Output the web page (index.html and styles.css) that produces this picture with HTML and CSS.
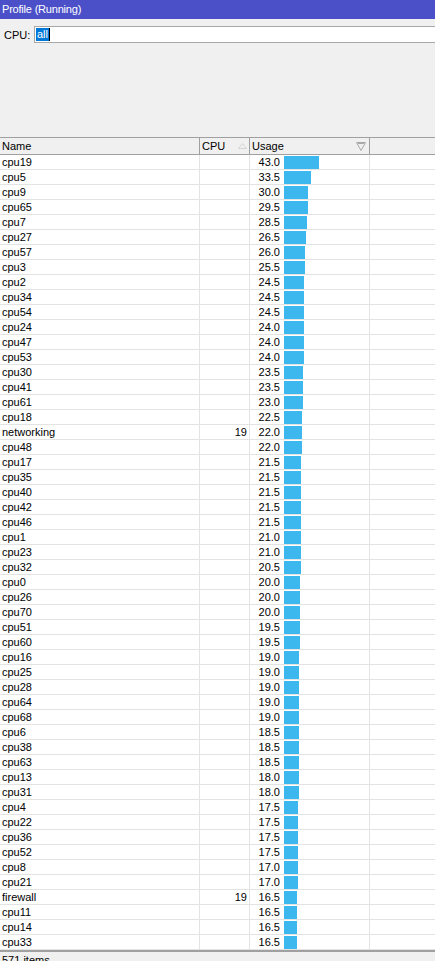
FILE: index.html
```html
<!DOCTYPE html>
<html>
<head>
<meta charset="utf-8">
<title>Profile</title>
<link rel="stylesheet" href="styles.css">
</head>
<body>
<div class="window">
  <div class="titlebar">Profile (Running)</div>
  <div class="panel">
    <div class="field">
      <span class="label">CPU:</span>
      <div class="input"><span class="sel">all</span><span class="caret"></span></div>
    </div>
  </div>
  <div class="grid">
    <div class="row head">
      <div class="c name">Name</div>
      <div class="c cpu hc">CPU<svg class="sort" width="9" height="6" viewBox="0 0 9 6"><path d="M0.5 5.5 L4.5 0.5 L8.5 5.5 Z" fill="none" stroke="#d4d4d4" stroke-width="1"/></svg></div>
      <div class="c usage hc">Usage<svg class="filt" width="10" height="9" viewBox="0 0 10 9"><path d="M0.5 0.5 H9.5 L5 8.5 Z M2 1.5 H8" fill="none" stroke="#a8a8a8" stroke-width="1"/></svg></div>
      <div class="c rest"></div>
    </div>
    <div class="rows" id="rows">
      <div class="row"><div class="c name">cpu19</div><div class="c cpu"></div><div class="c usage"><span class="num">43.0</span><span class="bar" style="width:35px"></span></div><div class="c rest"></div></div>
      <div class="row"><div class="c name">cpu5</div><div class="c cpu"></div><div class="c usage"><span class="num">33.5</span><span class="bar" style="width:27px"></span></div><div class="c rest"></div></div>
      <div class="row"><div class="c name">cpu9</div><div class="c cpu"></div><div class="c usage"><span class="num">30.0</span><span class="bar" style="width:24px"></span></div><div class="c rest"></div></div>
      <div class="row"><div class="c name">cpu65</div><div class="c cpu"></div><div class="c usage"><span class="num">29.5</span><span class="bar" style="width:24px"></span></div><div class="c rest"></div></div>
      <div class="row"><div class="c name">cpu7</div><div class="c cpu"></div><div class="c usage"><span class="num">28.5</span><span class="bar" style="width:23px"></span></div><div class="c rest"></div></div>
      <div class="row"><div class="c name">cpu27</div><div class="c cpu"></div><div class="c usage"><span class="num">26.5</span><span class="bar" style="width:22px"></span></div><div class="c rest"></div></div>
      <div class="row"><div class="c name">cpu57</div><div class="c cpu"></div><div class="c usage"><span class="num">26.0</span><span class="bar" style="width:21px"></span></div><div class="c rest"></div></div>
      <div class="row"><div class="c name">cpu3</div><div class="c cpu"></div><div class="c usage"><span class="num">25.5</span><span class="bar" style="width:21px"></span></div><div class="c rest"></div></div>
      <div class="row"><div class="c name">cpu2</div><div class="c cpu"></div><div class="c usage"><span class="num">24.5</span><span class="bar" style="width:20px"></span></div><div class="c rest"></div></div>
      <div class="row"><div class="c name">cpu34</div><div class="c cpu"></div><div class="c usage"><span class="num">24.5</span><span class="bar" style="width:20px"></span></div><div class="c rest"></div></div>
      <div class="row"><div class="c name">cpu54</div><div class="c cpu"></div><div class="c usage"><span class="num">24.5</span><span class="bar" style="width:20px"></span></div><div class="c rest"></div></div>
      <div class="row"><div class="c name">cpu24</div><div class="c cpu"></div><div class="c usage"><span class="num">24.0</span><span class="bar" style="width:20px"></span></div><div class="c rest"></div></div>
      <div class="row"><div class="c name">cpu47</div><div class="c cpu"></div><div class="c usage"><span class="num">24.0</span><span class="bar" style="width:20px"></span></div><div class="c rest"></div></div>
      <div class="row"><div class="c name">cpu53</div><div class="c cpu"></div><div class="c usage"><span class="num">24.0</span><span class="bar" style="width:20px"></span></div><div class="c rest"></div></div>
      <div class="row"><div class="c name">cpu30</div><div class="c cpu"></div><div class="c usage"><span class="num">23.5</span><span class="bar" style="width:19px"></span></div><div class="c rest"></div></div>
      <div class="row"><div class="c name">cpu41</div><div class="c cpu"></div><div class="c usage"><span class="num">23.5</span><span class="bar" style="width:19px"></span></div><div class="c rest"></div></div>
      <div class="row"><div class="c name">cpu61</div><div class="c cpu"></div><div class="c usage"><span class="num">23.0</span><span class="bar" style="width:19px"></span></div><div class="c rest"></div></div>
      <div class="row"><div class="c name">cpu18</div><div class="c cpu"></div><div class="c usage"><span class="num">22.5</span><span class="bar" style="width:18px"></span></div><div class="c rest"></div></div>
      <div class="row"><div class="c name">networking</div><div class="c cpu">19</div><div class="c usage"><span class="num">22.0</span><span class="bar" style="width:18px"></span></div><div class="c rest"></div></div>
      <div class="row"><div class="c name">cpu48</div><div class="c cpu"></div><div class="c usage"><span class="num">22.0</span><span class="bar" style="width:18px"></span></div><div class="c rest"></div></div>
      <div class="row"><div class="c name">cpu17</div><div class="c cpu"></div><div class="c usage"><span class="num">21.5</span><span class="bar" style="width:17px"></span></div><div class="c rest"></div></div>
      <div class="row"><div class="c name">cpu35</div><div class="c cpu"></div><div class="c usage"><span class="num">21.5</span><span class="bar" style="width:17px"></span></div><div class="c rest"></div></div>
      <div class="row"><div class="c name">cpu40</div><div class="c cpu"></div><div class="c usage"><span class="num">21.5</span><span class="bar" style="width:17px"></span></div><div class="c rest"></div></div>
      <div class="row"><div class="c name">cpu42</div><div class="c cpu"></div><div class="c usage"><span class="num">21.5</span><span class="bar" style="width:17px"></span></div><div class="c rest"></div></div>
      <div class="row"><div class="c name">cpu46</div><div class="c cpu"></div><div class="c usage"><span class="num">21.5</span><span class="bar" style="width:17px"></span></div><div class="c rest"></div></div>
      <div class="row"><div class="c name">cpu1</div><div class="c cpu"></div><div class="c usage"><span class="num">21.0</span><span class="bar" style="width:17px"></span></div><div class="c rest"></div></div>
      <div class="row"><div class="c name">cpu23</div><div class="c cpu"></div><div class="c usage"><span class="num">21.0</span><span class="bar" style="width:17px"></span></div><div class="c rest"></div></div>
      <div class="row"><div class="c name">cpu32</div><div class="c cpu"></div><div class="c usage"><span class="num">20.5</span><span class="bar" style="width:17px"></span></div><div class="c rest"></div></div>
      <div class="row"><div class="c name">cpu0</div><div class="c cpu"></div><div class="c usage"><span class="num">20.0</span><span class="bar" style="width:16px"></span></div><div class="c rest"></div></div>
      <div class="row"><div class="c name">cpu26</div><div class="c cpu"></div><div class="c usage"><span class="num">20.0</span><span class="bar" style="width:16px"></span></div><div class="c rest"></div></div>
      <div class="row"><div class="c name">cpu70</div><div class="c cpu"></div><div class="c usage"><span class="num">20.0</span><span class="bar" style="width:16px"></span></div><div class="c rest"></div></div>
      <div class="row"><div class="c name">cpu51</div><div class="c cpu"></div><div class="c usage"><span class="num">19.5</span><span class="bar" style="width:16px"></span></div><div class="c rest"></div></div>
      <div class="row"><div class="c name">cpu60</div><div class="c cpu"></div><div class="c usage"><span class="num">19.5</span><span class="bar" style="width:16px"></span></div><div class="c rest"></div></div>
      <div class="row"><div class="c name">cpu16</div><div class="c cpu"></div><div class="c usage"><span class="num">19.0</span><span class="bar" style="width:15px"></span></div><div class="c rest"></div></div>
      <div class="row"><div class="c name">cpu25</div><div class="c cpu"></div><div class="c usage"><span class="num">19.0</span><span class="bar" style="width:15px"></span></div><div class="c rest"></div></div>
      <div class="row"><div class="c name">cpu28</div><div class="c cpu"></div><div class="c usage"><span class="num">19.0</span><span class="bar" style="width:15px"></span></div><div class="c rest"></div></div>
      <div class="row"><div class="c name">cpu64</div><div class="c cpu"></div><div class="c usage"><span class="num">19.0</span><span class="bar" style="width:15px"></span></div><div class="c rest"></div></div>
      <div class="row"><div class="c name">cpu68</div><div class="c cpu"></div><div class="c usage"><span class="num">19.0</span><span class="bar" style="width:15px"></span></div><div class="c rest"></div></div>
      <div class="row"><div class="c name">cpu6</div><div class="c cpu"></div><div class="c usage"><span class="num">18.5</span><span class="bar" style="width:15px"></span></div><div class="c rest"></div></div>
      <div class="row"><div class="c name">cpu38</div><div class="c cpu"></div><div class="c usage"><span class="num">18.5</span><span class="bar" style="width:15px"></span></div><div class="c rest"></div></div>
      <div class="row"><div class="c name">cpu63</div><div class="c cpu"></div><div class="c usage"><span class="num">18.5</span><span class="bar" style="width:15px"></span></div><div class="c rest"></div></div>
      <div class="row"><div class="c name">cpu13</div><div class="c cpu"></div><div class="c usage"><span class="num">18.0</span><span class="bar" style="width:15px"></span></div><div class="c rest"></div></div>
      <div class="row"><div class="c name">cpu31</div><div class="c cpu"></div><div class="c usage"><span class="num">18.0</span><span class="bar" style="width:15px"></span></div><div class="c rest"></div></div>
      <div class="row"><div class="c name">cpu4</div><div class="c cpu"></div><div class="c usage"><span class="num">17.5</span><span class="bar" style="width:14px"></span></div><div class="c rest"></div></div>
      <div class="row"><div class="c name">cpu22</div><div class="c cpu"></div><div class="c usage"><span class="num">17.5</span><span class="bar" style="width:14px"></span></div><div class="c rest"></div></div>
      <div class="row"><div class="c name">cpu36</div><div class="c cpu"></div><div class="c usage"><span class="num">17.5</span><span class="bar" style="width:14px"></span></div><div class="c rest"></div></div>
      <div class="row"><div class="c name">cpu52</div><div class="c cpu"></div><div class="c usage"><span class="num">17.5</span><span class="bar" style="width:14px"></span></div><div class="c rest"></div></div>
      <div class="row"><div class="c name">cpu8</div><div class="c cpu"></div><div class="c usage"><span class="num">17.0</span><span class="bar" style="width:14px"></span></div><div class="c rest"></div></div>
      <div class="row"><div class="c name">cpu21</div><div class="c cpu"></div><div class="c usage"><span class="num">17.0</span><span class="bar" style="width:14px"></span></div><div class="c rest"></div></div>
      <div class="row"><div class="c name">firewall</div><div class="c cpu">19</div><div class="c usage"><span class="num">16.5</span><span class="bar" style="width:13px"></span></div><div class="c rest"></div></div>
      <div class="row"><div class="c name">cpu11</div><div class="c cpu"></div><div class="c usage"><span class="num">16.5</span><span class="bar" style="width:13px"></span></div><div class="c rest"></div></div>
      <div class="row"><div class="c name">cpu14</div><div class="c cpu"></div><div class="c usage"><span class="num">16.5</span><span class="bar" style="width:13px"></span></div><div class="c rest"></div></div>
      <div class="row"><div class="c name">cpu33</div><div class="c cpu"></div><div class="c usage"><span class="num">16.5</span><span class="bar" style="width:13px"></span></div><div class="c rest"></div></div>
    </div>
  </div>
  <div class="status">571 items</div>
</div>
</body>
</html>
```

FILE: styles.css
```css
html, body {
  margin: 0;
  padding: 0;
  overflow: hidden;
  background: #f0f0f0;
}
body {
  font-family: "Liberation Sans", Arial, sans-serif;
  font-size: 11px;
  color: #000;
  width: 435px;
  height: 961px;
}
.window {
  display: flex;
  flex-direction: column;
  width: 435px;
  height: 961px;
  overflow: hidden;
}
.titlebar {
  height: 19px;
  line-height: 19px;
  background: #4b50c9;
  color: #fff;
  padding-left: 2px;
  font-size: 11px;
  letter-spacing: -0.2px;
  flex: none;
}
.panel {
  height: 118px;
  flex: none;
  padding-top: 7px;
  box-sizing: border-box;
}
.field {
  display: flex;
  align-items: center;
  height: 17px;
}
.label {
  width: 34px;
  padding-left: 4px;
  box-sizing: border-box;
  flex: none;
}
.input {
  flex: 1;
  height: 17px;
  box-sizing: border-box;
  background: #fff;
  border-top: 1px solid #a8a8a8;
  border-bottom: 1px solid #a8a8a8;
  border-left: 1px solid #a8a8a8;
  display: flex;
  align-items: center;
  padding-left: 1px;
}
.sel {
  background: #0078d7;
  color: #fff;
  height: 13px;
  line-height: 13px;
  padding: 0 1px;
}
.caret {
  width: 1px;
  height: 13px;
  background: #000;
}
.grid {
  flex: none;
  background: #fff;
}
.row {
  display: flex;
  height: 15px;
  box-sizing: border-box;
  border-bottom: 1px solid #e3e3e3;
}
.row.head {
  height: 18px;
  background: #f0f0f0;
  border-top: 1px solid #a0a0a0;
  border-bottom: 1px solid #a0a0a0;
}
.c {
  box-sizing: border-box;
  height: 100%;
  line-height: 14px;
  border-right: 1px solid #e3e3e3;
  white-space: nowrap;
  overflow: hidden;
}
.head .c {
  line-height: 16px;
  border-right-color: #a0a0a0;
}
.name {
  width: 200px;
  padding-left: 2px;
}
.cpu {
  width: 50px;
  text-align: right;
  padding-right: 2px;
}
.usage {
  width: 120px;
  display: flex;
  align-items: flex-start;
}
.rest {
  flex: 1;
  border-right: none;
}
.hc {
  display: flex;
  justify-content: space-between;
  align-items: center;
  text-align: left;
  padding-left: 2px;
  padding-right: 2px;
}
.head .usage {
  align-items: center;
}
.num {
  width: 30px;
  text-align: right;
  flex: none;
}
.bar {
  display: block;
  height: 13px;
  margin-top: 1px;
  margin-left: 4px;
  background: #3db8ee;
  flex: none;
}
.filt {
  margin-right: 1px;
}
.status {
  flex: 1;
  border-top: 2px solid #a0a0a0;
  padding-left: 2px;
  line-height: 14px;
  padding-top: 1px;
}
```
